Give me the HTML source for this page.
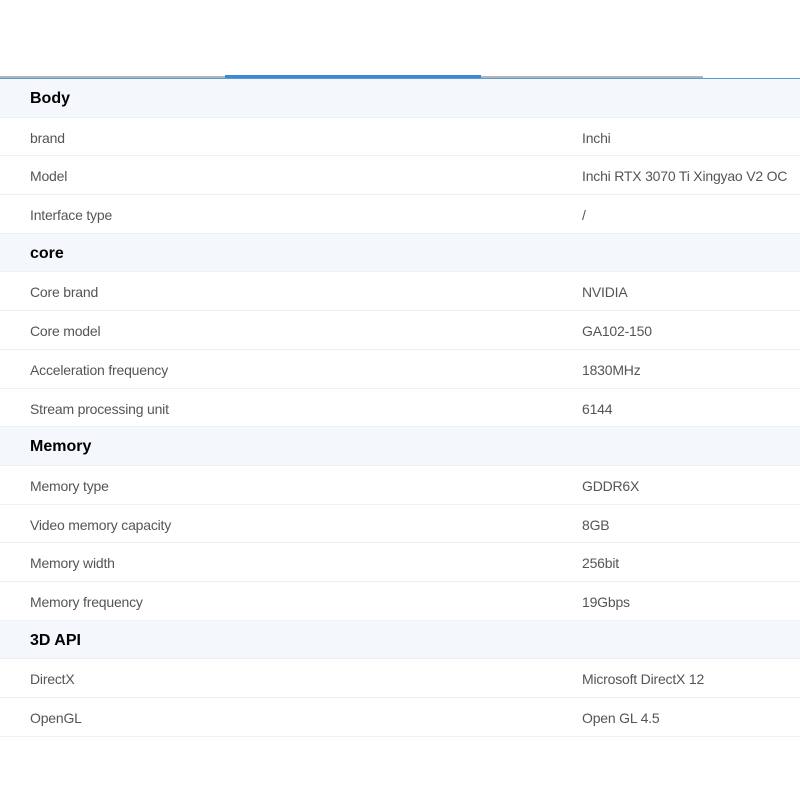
<!DOCTYPE html>
<html><head><style>
*{margin:0;padding:0;box-sizing:border-box}
body{width:800px;height:800px;background:#fff;font-family:"Liberation Sans",sans-serif;position:relative;overflow:hidden}
.g1{position:absolute;top:76px;left:0;width:225px;height:2px;background:#b5b5b5}
.b1{position:absolute;top:75px;left:225px;width:256px;height:3px;background:#3e88d0}
.g2{position:absolute;top:76px;left:481px;width:222px;height:2px;background:#b5b5b5}
.line{position:absolute;top:78px;left:0;width:800px;height:1px;background:#5c9ad6}
.t{position:absolute;top:79px;left:0;width:800px}
.r{height:38.7px;border-bottom:1px solid #eef1f4;position:relative;font-size:14px;color:#555;letter-spacing:-0.2px}
.r span{position:absolute;top:12px;white-space:nowrap}
.r .k{left:30px}.r .v{left:582px}
.h{background:#f4f8fc;color:#000;font-weight:bold;font-size:16px;letter-spacing:0}
.h span{top:11px}
</style></head><body>
<div class="g1"></div><div class="b1"></div><div class="g2"></div><div class="line"></div>
<div class="t">
<div class="r h"><span class="k">Body</span></div>
<div class="r"><span class="k">brand</span><span class="v">Inchi</span></div>
<div class="r"><span class="k">Model</span><span class="v">Inchi RTX 3070 Ti Xingyao V2 OC</span></div>
<div class="r"><span class="k">Interface type</span><span class="v">/</span></div>
<div class="r h"><span class="k">core</span></div>
<div class="r"><span class="k">Core brand</span><span class="v">NVIDIA</span></div>
<div class="r"><span class="k">Core model</span><span class="v">GA102-150</span></div>
<div class="r"><span class="k">Acceleration frequency</span><span class="v">1830MHz</span></div>
<div class="r"><span class="k">Stream processing unit</span><span class="v">6144</span></div>
<div class="r h"><span class="k">Memory</span></div>
<div class="r"><span class="k">Memory type</span><span class="v">GDDR6X</span></div>
<div class="r"><span class="k">Video memory capacity</span><span class="v">8GB</span></div>
<div class="r"><span class="k">Memory width</span><span class="v">256bit</span></div>
<div class="r"><span class="k">Memory frequency</span><span class="v">19Gbps</span></div>
<div class="r h"><span class="k">3D API</span></div>
<div class="r"><span class="k">DirectX</span><span class="v">Microsoft DirectX 12</span></div>
<div class="r"><span class="k">OpenGL</span><span class="v">Open GL 4.5</span></div>
</div>
</body></html>
